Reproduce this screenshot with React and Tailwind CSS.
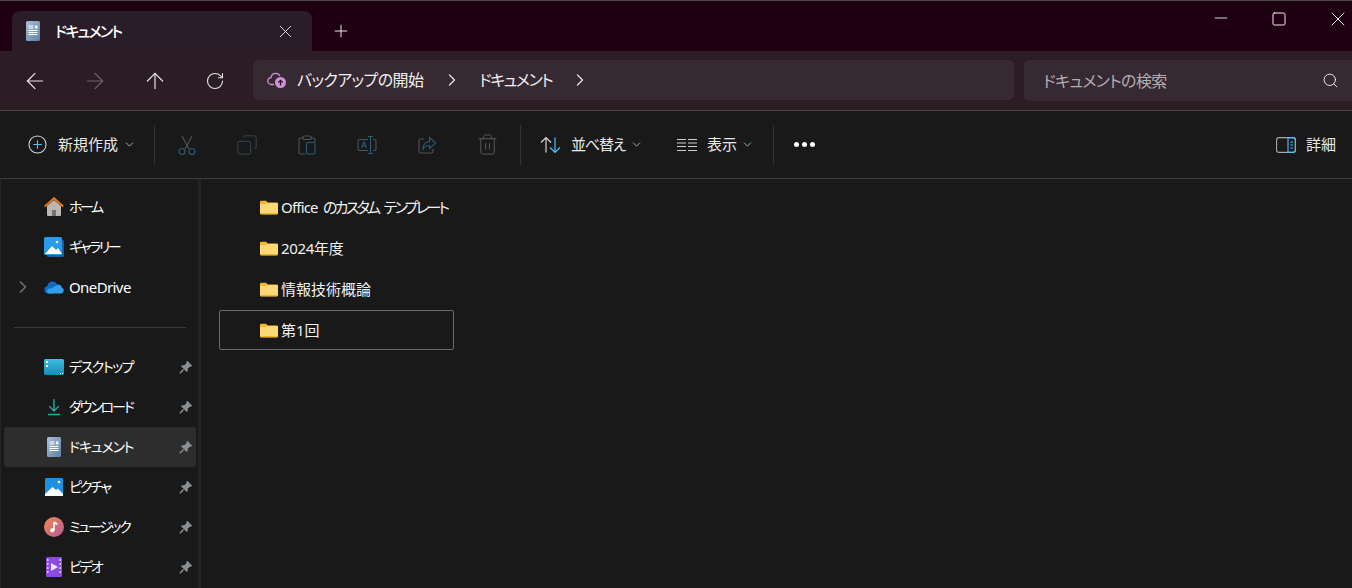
import { Plus, X, ArrowLeft, ArrowRight, ArrowUp, RotateCw, ChevronRight, ChevronDown, Search, Copy, Trash2, Minus, Square } from 'lucide-react';

const font = 'font-["Noto_Sans","Noto_Sans_CJK_JP",sans-serif] [font-feature-settings:"palt"]';

function DocIcon({ className }) {
  return (
    <svg viewBox="0 0 16 22" className={className}>
      <defs>
        <linearGradient id="docg" x1="0" y1="0" x2="1" y2="1">
          <stop offset="0" stopColor="#a9bfd8" />
          <stop offset="1" stopColor="#5d81a6" />
        </linearGradient>
      </defs>
      <rect x="1" y="1" width="14" height="20" rx="1.5" fill="url(#docg)" />
      <path d="M3.5 6h5M3.5 8h5M3.5 10.5h9M3.5 12.5h9M3.5 14.5h9" stroke="#fff" strokeWidth="1" />
      <rect x="10" y="5.5" width="2.5" height="3" fill="#fff" />
    </svg>
  );
}

function Folder() {
  return (
    <svg viewBox="0 0 18 15" className="w-[18px] h-[15px] shrink-0">
      <path d="M0 2a1.2 1.2 0 0 1 1.2-1.2h4.6L8 2.6h8.8A1.2 1.2 0 0 1 18 3.8V13a1.2 1.2 0 0 1-1.2 1.2H1.2A1.2 1.2 0 0 1 0 13z" fill="#f4b82c" />
      <path d="M0 5a1 1 0 0 1 1-1h4.6L7.8 3h9A1.2 1.2 0 0 1 18 4.2V13a1.2 1.2 0 0 1-1.2 1.2H1.2A1.2 1.2 0 0 1 0 13z" fill="#fdd975" />
      <path d="M0 13h18a1.2 1.2 0 0 1-1.2 1.2H1.2A1.2 1.2 0 0 1 0 13z" fill="#f0b429" />
    </svg>
  );
}

function HomeIcon() {
  return (
    <svg viewBox="0 0 20 20" className="w-5 h-5">
      <path d="M3 9l7-6 7 6v9a1 1 0 0 1-1 1h-4v-6H8v6H4a1 1 0 0 1-1-1z" fill="#b9b6b4" />
      <path d="M8 13h4v6H8z" fill="#77716d" />
      <path d="M.8 9.5 10 1.2l9.2 8.3" fill="none" stroke="#e8761c" strokeWidth="2" />
    </svg>
  );
}

function GalleryIcon() {
  return (
    <svg viewBox="0 0 20 20" className="w-5 h-5">
      <rect x="3" y="3" width="17" height="17" rx="1.5" fill="#1b5fa8" />
      <rect x="0" y="0" width="18" height="18" rx="1.5" fill="#2a9be6" />
      <path d="M1 17l7-8 4 4 2-2 4 6z" fill="#fff" />
      <circle cx="13" cy="5" r="1.3" fill="#fff" />
    </svg>
  );
}

function CloudIcon() {
  return (
    <svg viewBox="0 0 20 14" className="w-5 h-[14px]">
      <path d="M4 13.5a3.8 3.8 0 0 1-.6-7.5 5.2 5.2 0 0 1 9.8-1.6A4 4 0 0 1 18 8l-9 5.5z" fill="#0f6cc4" />
      <path d="M4 13.5h13a3 3 0 0 0 1-5.7 4 4 0 0 0-6.5-1.8L7 8.5a3 3 0 0 0-3 5z" fill="#2f9fe8" />
    </svg>
  );
}

function DesktopIcon() {
  return (
    <svg viewBox="0 0 20 16" className="w-5 h-4">
      <defs>
        <linearGradient id="deskg" x1="0" y1="0" x2="0" y2="1">
          <stop offset="0" stopColor="#3dbde0" />
          <stop offset="1" stopColor="#0f8fb8" />
        </linearGradient>
      </defs>
      <rect x="0" y="0" width="20" height="16" rx="1.5" fill="url(#deskg)" />
      <rect x="2" y="2" width="2" height="2" fill="#fff" />
      <rect x="2" y="6" width="2" height="2" fill="#fff" />
      <rect x="16" y="14" width="1" height="1" fill="#fff" />
      <rect x="18" y="14" width="1" height="1" fill="#fff" />
    </svg>
  );
}

function DownloadIcon() {
  return (
    <svg viewBox="0 0 16 20" className="w-[14px] h-[18px]" fill="none" stroke="#1eb398" strokeWidth="1.6">
      <path d="M8 1v13M2.5 9 8 14.5 13.5 9M1 18.5h14" />
    </svg>
  );
}

function PictureIcon() {
  return (
    <svg viewBox="0 0 18 18" className="w-[18px] h-[18px]">
      <rect width="18" height="18" rx="1.2" fill="#1f8fe0" />
      <path d="M0 18v-2l7.5-7 3.5 3 2-1.6 5 5.6v2z" fill="#fff" />
      <circle cx="14" cy="4" r="1.3" fill="#fff" />
    </svg>
  );
}

function MusicIcon() {
  return (
    <svg viewBox="0 0 20 20" className="w-5 h-5">
      <defs>
        <linearGradient id="musg" x1="0" y1="0" x2="1" y2="1">
          <stop offset="0" stopColor="#f08a50" />
          <stop offset="1" stopColor="#b4589c" />
        </linearGradient>
      </defs>
      <circle cx="10" cy="10" r="10" fill="url(#musg)" />
      <path d="M10 5v8" stroke="#fff" strokeWidth="1.6" />
      <path d="M10 5c1 1.5 2.5 1.5 3.5 2" stroke="#fff" strokeWidth="1.6" fill="none" />
      <circle cx="8.3" cy="13.3" r="2.1" fill="#fff" />
    </svg>
  );
}

function VideoIcon() {
  return (
    <svg viewBox="0 0 16 20" className="w-4 h-5">
      <rect width="16" height="20" rx="1.2" fill="#8a4be0" />
      <path d="M5 6l7 4-7 4z" fill="#f0e6ff" />
      <path d="M1 2h1.5v2H1zM1 6h1.5v2H1zM1 10h1.5v2H1zM1 14h1.5v2H1zM13.5 2H15v2h-1.5zM13.5 6H15v2h-1.5zM13.5 10H15v2h-1.5zM13.5 14H15v2h-1.5z" fill="#e4d4ff" />
    </svg>
  );
}

function BackupIcon() {
  return (
    <svg viewBox="0 0 20 18" className="w-5 h-[18px]">
      <path d="M7 13.5H4.5a3.5 3.5 0 0 1-.4-7 4.6 4.6 0 0 1 8.8-1.4" fill="none" stroke="#d291dd" strokeWidth="1.3" />
      <circle cx="13.5" cy="11.5" r="5.5" fill="#d291dd" />
      <path d="M13.5 14.5v-5M11.3 11.5l2.2-2.2 2.2 2.2" fill="none" stroke="#2b1c28" strokeWidth="1.3" />
    </svg>
  );
}

function ScissorsIcon() {
  return (
    <svg viewBox="0 0 20 20" className="w-5 h-5" fill="none" strokeWidth="1.2">
      <path d="M5 1l7 13M15 1 8 14" stroke="#4f5358" />
      <circle cx="5" cy="16.500" r="3" stroke="#2b5a78" />
      <circle cx="15" cy="16.500" r="3" stroke="#2b5a78" />
    </svg>
  );
}

function PasteIcon() {
  return (
    <svg viewBox="0 0 20 20" className="w-5 h-5" fill="none" strokeWidth="1.1">
      <path d="M6 3H3.5A1.5 1.5 0 0 0 2 4.5v13A1.5 1.5 0 0 0 3.5 19H8M14 3h2.5A1.5 1.5 0 0 1 18 4.5V7" stroke="#4f5358" />
      <rect x="6" y="1" width="8" height="3.5" rx="1" stroke="#4f5358" />
      <rect x="9.5" y="7.5" width="8.5" height="11.5" rx="1.5" stroke="#2b5a78" />
    </svg>
  );
}

function RenameIcon() {
  return (
    <svg viewBox="0 0 20 20" className="w-5 h-5" fill="none" strokeWidth="1.1">
      <path d="M11 4.5H2.5A1.5 1.5 0 0 0 1 6v8a1.5 1.5 0 0 0 1.5 1.5H11M16 4.5h1.5A1.5 1.5 0 0 1 19 6v8a1.5 1.5 0 0 1-1.5 1.5H16" stroke="#4f5358" />
      <path d="M11 1.5h5M13.5 1.5v17M11 18.5h5" stroke="#2b5a78" />
      <path d="M4.5 13 7 7l2.500 6M5.400 11h3.200" stroke="#2b5a78" />
    </svg>
  );
}

function ShareIcon() {
  return (
    <svg viewBox="0 0 20 20" className="w-5 h-5" fill="none" strokeWidth="1.1">
      <path d="M7 4H3.500A1.500 1.500 0 0 0 2 5.500v11A1.500 1.500 0 0 0 3.500 18h11a1.500 1.500 0 0 0 1.500-1.500V14" stroke="#4f5358" />
      <path d="M12.500 2.500 18.500 8l-6 5.500V10.500c-3 0-5 1-6.500 3.500 0-4 2.500-7 6.500-7.500z" stroke="#2b5a78" />
    </svg>
  );
}

function SortIcon() {
  return (
    <svg viewBox="0 0 21 18" className="w-[21px] h-[18px]" fill="none" strokeWidth="1.2">
      <path d="M6 16.500V1.500M1 6.500l5-5 5 5" stroke="#d6d6d6" />
      <path d="M15 1.500v15M10 11.500l5 5 5-5" stroke="#4cc2ff" />
    </svg>
  );
}

function ViewIcon() {
  return (
    <svg viewBox="0 0 20 14" className="w-5 h-[14px]" stroke="#cfcfcf" strokeWidth="1">
      <path d="M0 1.500h9M0 5h9M0 8.500h9M0 12.500h9M11 1.500h9M11 5h9M11 8.500h9M11 12.500h9" />
    </svg>
  );
}

function DetailsIcon() {
  return (
    <svg viewBox="0 0 20 16" className="w-5 h-4" fill="none">
      <rect x=".6" y=".6" width="18.800" height="14.800" rx="2.500" stroke="#a8a8a8" strokeWidth="1.100" />
      <path d="M12 .6h5a2.400 2.400 0 0 1 2.400 2.400v10a2.400 2.400 0 0 1-2.400 2.400h-5z" stroke="#4cc2ff" strokeWidth="1.100" />
      <path d="M14.500 5h2.500M14.500 8h2.500M14.500 11h2.500" stroke="#4cc2ff" />
    </svg>
  );
}

function PinIcon() {
  return (
    <svg viewBox="0 0 14 14" className="w-[14px] h-[14px] mr-[3px] shrink-0">
      <path d="M8.300 .8 13.200 5.700 12 6.700 11 6.400 8.700 8.700 8.700 11 7.700 12 2 6.300 3 5.300 5.300 5.300 7.600 3 7.300 2z" fill="#8a8f94" />
      <path d="M4.500 9.500.8 13.200" stroke="#8a8f94" strokeWidth="1.400" />
    </svg>
  );
}

const rows1 = [
  { name: 'ホーム', icon: <HomeIcon />, track: 'text-[14px] tracking-[-2.5px]' },
  { name: 'ギャラリー', icon: <GalleryIcon />, track: 'text-[14px] tracking-[-2.3px]' },
  { name: 'OneDrive', icon: <CloudIcon />, arrow: true, track: 'text-[15px] tracking-[-0.6px]' },
];

const rows2 = [
  { name: 'デスクトップ', icon: <DesktopIcon />, track: 'text-[14px] tracking-[-1.5px]' },
  { name: 'ダウンロード', icon: <DownloadIcon />, track: 'text-[14px] tracking-[-2.1px]' },
  { name: 'ドキュメント', icon: <DocIcon className="w-[16px] h-[22px]" />, active: true, track: 'text-[14px] tracking-[-1.2px]' },
  { name: 'ピクチャ', icon: <PictureIcon />, track: 'text-[14px] tracking-[-2.2px]' },
  { name: 'ミュージック', icon: <MusicIcon />, track: 'text-[14px] tracking-[-2.3px]' },
  { name: 'ビデオ', icon: <VideoIcon />, track: 'text-[14px] tracking-[-2.1px]' },
];

const folders = [
  { key: 'office', name: <><span className="tracking-[-0.8px]">Office</span><span className="tracking-[-2.7px] [word-spacing:4px]"> のカスタム テンプレート</span></> },
  { key: '2024', name: <span className="tracking-[-0.3px]">2024年度</span> },
  { key: 'gairon', name: '情報技術概論' },
  { key: 'dai1', name: '第1回' },
];

function NavRow({ row, pinned }) {
  return (
    <div className={`h-10 ml-[3px] w-[192px] flex items-center rounded-[3px] ${row.active ? 'bg-[#2d2d2d]' : ''}`}>
      <div className="w-[14px] ml-[9px] shrink-0">
        {row.arrow && <ChevronRight size={20} strokeWidth={2} className="text-[#6f6f6f]" />}
      </div>
      <div className="w-5 ml-[17px] flex justify-center shrink-0">{row.icon}</div>
      <span className={`ml-[5px] leading-5 text-white flex-1 whitespace-nowrap ${row.track}`}>{row.name}</span>
      {pinned && <PinIcon />}
    </div>
  );
}

export default function App() {
  return (
    <div className={`w-[1352px] h-[588px] overflow-hidden bg-[#191919] flex flex-col ${font}`}>
      {/* title bar */}
      <div className="h-[51px] shrink-0 bg-[#1e0010] border-t border-[#4a4a48] flex items-end pl-3">
        <div className="w-[300px] h-10 bg-[#2b1d28] rounded-t-lg flex items-center pl-[13px] pr-[16px]">
          <DocIcon className="w-[16px] h-[22px]" />
          <span className="ml-[14px] text-[15px] font-medium text-white tracking-[-1.7px]">ドキュメント</span>
          <X size={21} strokeWidth={1.1} className="ml-auto text-[#e0e0e0]" />
        </div>
        <div className="h-10 ml-[19px] flex items-center">
          <Plus size={20} strokeWidth={1.2} className="text-[#e8e8e8]" />
        </div>
        <div className="ml-auto self-start flex items-start mt-[8px] pr-[2px] text-white">
          <Minus size={20} strokeWidth={1} className="-mt-px" />
          <Square size={16} strokeWidth={1.4} className="ml-[40px] mt-[2px]" />
          <X size={24} strokeWidth={0.9} className="ml-[39px] -mt-[2px]" />
        </div>
      </div>

      {/* nav bar */}
      <div className="h-[60px] shrink-0 bg-[#2c1d25] border-b border-[#494547] flex items-start text-white">
        <div className="w-[253px] h-full shrink-0 flex items-center pl-[25px] gap-10">
          <ArrowLeft size={26} strokeWidth={1.1} className="-mx-[3px] text-[#e6e6e6]" />
          <ArrowRight size={26} strokeWidth={1.1} className="-mx-[3px] text-[#6e656a]" />
          <ArrowUp size={26} strokeWidth={1.1} className="-mx-[3px] text-[#e6e6e6]" />
          <RotateCw size={20} strokeWidth={1.3} className="text-[#e6e6e6]" />
        </div>
        <div className="w-[761px] h-10 mt-[9px] bg-[#372931] rounded-[5px] flex items-center pl-[14px]">
          <BackupIcon />
          <span className="ml-[10px] w-[145px] text-[16px] tracking-[-0.6px] text-[#f0f0f0] whitespace-nowrap">バックアップの開始</span>
          <ChevronRight size={20} strokeWidth={1.5} className="text-[#e0e0e0]" />
          <span className="ml-[17px] w-[91px] text-[16px] tracking-[-1.4px] text-[#f0f0f0] whitespace-nowrap">ドキュメント</span>
          <ChevronRight size={20} strokeWidth={1.5} className="text-[#e0e0e0]" />
        </div>
        <div className="ml-[10px] mt-[9px] flex-1 h-[41px] bg-[#372931] rounded-l-[5px] flex items-center pl-[19px] pr-[13px]">
          <span className="text-[16px] tracking-[-0.6px] text-[#b4aeb1] whitespace-nowrap">ドキュメントの検索</span>
          <Search size={17} strokeWidth={1.4} className="ml-auto text-[#e6e6e6]" />
        </div>
      </div>

      {/* command bar */}
      <div className="h-[68px] shrink-0 bg-[#191919] border-b border-[#3f3f3f] flex items-center text-[#e8e8e8] text-[15px]">
        <div className="flex items-center pl-[28px] w-[154px] shrink-0">
          <svg viewBox="0 0 20 20" className="w-[19px] h-[19px]" fill="none">
            <circle cx="10" cy="10" r="9" stroke="#d6d6d6" strokeWidth="1.100" />
            <path d="M10 5.500v9M5.500 10h9" stroke="#4cc2ff" strokeWidth="1.200" />
          </svg>
          <span className="ml-[11px] whitespace-nowrap">新規作成</span>
          <ChevronDown size={13} strokeWidth={1.5} className="ml-[5px] text-[#c8c8c8]" />
        </div>
        <div className="w-px h-10 bg-[#333333] shrink-0" />
        <div className="w-[365px] shrink-0 flex items-center pl-[22px] gap-10">
          <ScissorsIcon />
          <Copy size={22} strokeWidth={1} className="-mx-px text-[#3a4a55] scale-x-[-1]" />
          <PasteIcon />
          <RenameIcon />
          <ShareIcon />
          <Trash2 size={23} strokeWidth={1} className="-mx-px text-[#5c5c5c]" />
        </div>
        <div className="w-px h-10 bg-[#333333] shrink-0" />
        <div className="flex items-center w-[252px] shrink-0 pl-[19px]">
          <SortIcon />
          <span className="ml-[10px] tracking-[-1.2px] whitespace-nowrap">並べ替え</span>
          <ChevronDown size={13} strokeWidth={1.5} className="ml-[5px] text-[#c8c8c8]" />
          <div className="ml-[34px]"><ViewIcon /></div>
          <span className="ml-[10px] whitespace-nowrap">表示</span>
          <ChevronDown size={13} strokeWidth={1.5} className="ml-[4px] text-[#c8c8c8]" />
        </div>
        <div className="w-px h-10 bg-[#333333] shrink-0" />
        <div className="ml-[20px] flex gap-[3px]">
          <span className="w-[5px] h-[5px] rounded-full bg-white" />
          <span className="w-[5px] h-[5px] rounded-full bg-white" />
          <span className="w-[5px] h-[5px] rounded-full bg-white" />
        </div>
        <div className="ml-auto flex items-center pr-[16px]">
          <DetailsIcon />
          <span className="ml-[10px] whitespace-nowrap">詳細</span>
        </div>
      </div>

      {/* body */}
      <div className="flex-1 flex min-h-0">
        <div className="w-[201px] shrink-0 border-l border-l-[#2a2226] border-r-[3px] border-r-[#232323] pt-2 overflow-hidden">
          {rows1.map((r) => <NavRow key={r.name} row={r} />)}
          <div className="h-10 flex items-center pl-[13px]">
            <div className="w-[172px] h-px bg-[#3a3a3a]" />
          </div>
          {rows2.map((r) => <NavRow key={r.name} row={r} pinned />)}
        </div>
        <div className="flex-1 pl-[18px] pt-2 flex flex-col gap-px">
          {folders.map((f, i) => (
            <div key={f.key} className={`w-[235px] h-10 shrink-0 rounded-[2px] flex items-center ${i === 3 ? 'border border-[#6a6a6a] pl-[40px]' : 'pl-[41px]'}`}>
              <Folder />
              <span className="ml-[3px] text-[15px] leading-5 text-[#f0f0f0] whitespace-nowrap">{f.name}</span>
            </div>
          ))}
        </div>
      </div>
    </div>
  );
}
